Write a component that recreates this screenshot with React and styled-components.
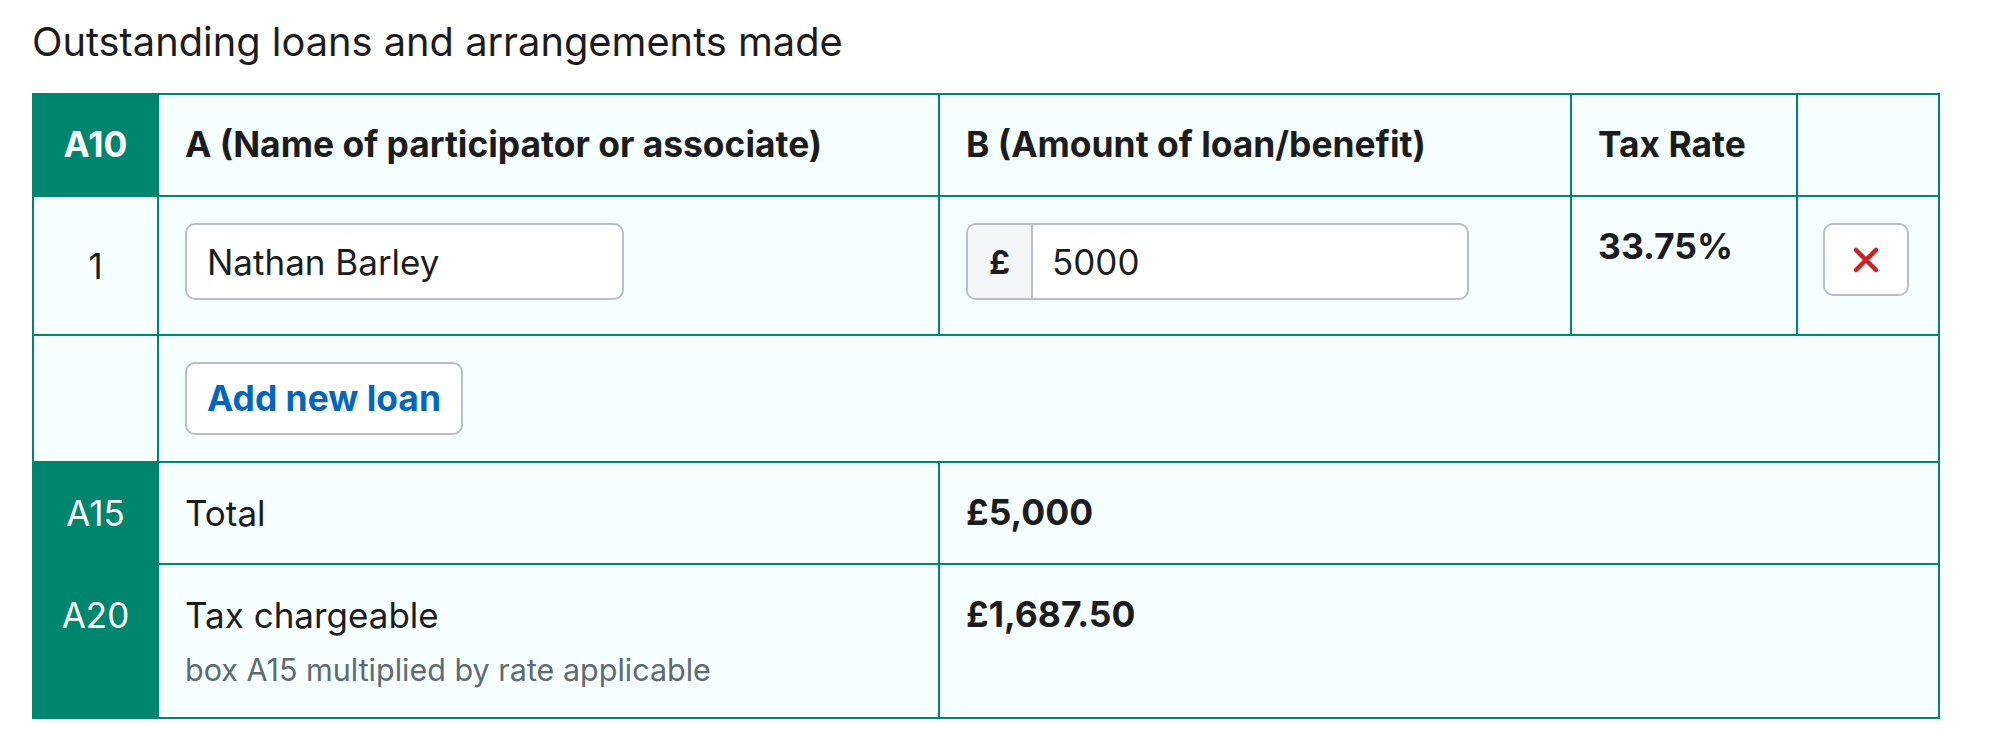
import React from "react";
import styled, { createGlobalStyle } from "styled-components";

const GREEN = "#00856e";
const CELL_BG = "#f5fffd";
const INK = "#1c1c1e";
const FIELD_BORDER = "#b8bec4";

const GlobalStyle = createGlobalStyle`
  body {
    margin: 0;
    background: #ffffff;
    font-family: Inter, Lato, "Liberation Sans", sans-serif;
    color: ${INK};
  }
`;

const Page = styled.div`
  padding: 18px 32px 0;
`;

const Heading = styled.h2`
  margin: 0 0 27px;
  font-size: 39.8px;
  line-height: 48px;
  font-weight: 400;
`;

const Table = styled.table`
  width: 1906px;
  table-layout: fixed;
  border-collapse: collapse;
  border: 2px solid ${GREEN};
`;

const Cell = styled.td`
  background: ${(p) => (p.$code ? GREEN : CELL_BG)};
  color: ${(p) => (p.$code ? "#ffffff" : INK)};
  border: 2px solid ${GREEN};
  padding: ${(p) => p.$pad || "26px"};
  vertical-align: ${(p) => p.$align || "top"};
  text-align: ${(p) => (p.$center ? "center" : "left")};
  font-size: ${(p) => (p.$bold ? 35.5 : 35)}px;
  line-height: 48px;
  font-weight: ${(p) => (p.$bold ? 700 : 400)};
`;

const HeadCell = styled.th`
  background: ${(p) => (p.$code ? GREEN : CELL_BG)};
  color: ${(p) => (p.$code ? "#ffffff" : INK)};
  border: 2px solid ${GREEN};
  padding: 26px;
  text-align: ${(p) => (p.$center ? "center" : "left")};
  vertical-align: middle;
  font-size: 35.4px;
  line-height: 48px;
  font-weight: 700;
`;

const TextField = styled.input`
  box-sizing: border-box;
  width: ${(p) => p.$width}px;
  height: 77px;
  padding: 0 20px;
  border: 2px solid ${FIELD_BORDER};
  border-radius: 10px;
  background: #ffffff;
  font: inherit;
  font-weight: 400;
  color: ${INK};
  outline: none;
`;

const MoneyField = styled.div`
  box-sizing: border-box;
  display: flex;
  width: 503px;
  height: 77px;
  border: 2px solid ${FIELD_BORDER};
  border-radius: 10px;
  overflow: hidden;
  background: #ffffff;
`;

const Prefix = styled.span`
  display: flex;
  align-items: center;
  justify-content: center;
  width: 63px;
  background: #f4f5f7;
  border-right: 2px solid ${FIELD_BORDER};
  font-weight: 700;
  font-size: 33px;
`;

const MoneyInput = styled.input`
  flex: 1;
  min-width: 0;
  border: none;
  padding: 0 19px;
  font: inherit;
  color: ${INK};
  background: transparent;
  outline: none;
`;

const Button = styled.button`
  box-sizing: border-box;
  display: inline-flex;
  align-items: center;
  justify-content: center;
  height: 73px;
  padding: 0 ${(p) => (p.$icon ? 0 : 20)}px;
  width: ${(p) => (p.$icon ? "86px" : "auto")};
  border: 2px solid ${FIELD_BORDER};
  border-radius: 10px;
  background: #ffffff;
  color: #0066c2;
  font-family: inherit;
  font-size: 35.4px;
  font-weight: 700;
  cursor: pointer;
`;

const Hint = styled.div`
  margin-top: 10px;
  font-size: 30.5px;
  line-height: 42px;
  color: #5f6a72;
`;

const CrossIcon = () => (
  <svg width="26" height="26" viewBox="0 0 26 26">
    <path
      d="M3 3 L23 23 M23 3 L3 23"
      stroke="#d41f1f"
      strokeWidth="4.5"
      strokeLinecap="round"
      fill="none"
    />
  </svg>
);

const loans = [{ id: 1, name: "Nathan Barley", amount: "5000", rate: "33.75%" }];

export default function App() {
  return (
    <Page>
      <GlobalStyle />
      <Heading>Outstanding loans and arrangements made</Heading>
      <Table>
        <colgroup>
          <col style={{ width: 125 }} />
          <col style={{ width: 781 }} />
          <col style={{ width: 632 }} />
          <col style={{ width: 226 }} />
          <col style={{ width: 142 }} />
        </colgroup>
        <thead>
          <tr>
            <HeadCell $code $center>A10</HeadCell>
            <HeadCell>A (Name of participator or associate)</HeadCell>
            <HeadCell>B (Amount of loan/benefit)</HeadCell>
            <HeadCell>Tax Rate</HeadCell>
            <HeadCell />
          </tr>
        </thead>
        <tbody>
          {loans.map((loan) => (
            <tr key={loan.id}>
              <Cell $center $align="middle">{loan.id}</Cell>
              <Cell $pad="26px 26px 34px">
                <TextField $width={439} defaultValue={loan.name} />
              </Cell>
              <Cell $pad="26px 26px 34px">
                <MoneyField>
                  <Prefix>£</Prefix>
                  <MoneyInput defaultValue={loan.amount} />
                </MoneyField>
              </Cell>
              <Cell $bold>{loan.rate}</Cell>
              <Cell $pad="26px 26px 26px 25px">
                <Button $icon aria-label="Remove loan">
                  <CrossIcon />
                </Button>
              </Cell>
            </tr>
          ))}
          <tr>
            <Cell />
            <Cell colSpan={4}>
              <Button>Add new loan</Button>
            </Cell>
          </tr>
          <tr>
            <Cell $code $center>A15</Cell>
            <Cell>Total</Cell>
            <Cell colSpan={3} $bold>£5,000</Cell>
          </tr>
          <tr>
            <Cell $code $center>A20</Cell>
            <Cell>
              Tax chargeable
              <Hint>box A15 multiplied by rate applicable</Hint>
            </Cell>
            <Cell colSpan={3} $bold>£1,687.50</Cell>
          </tr>
        </tbody>
      </Table>
    </Page>
  );
}
